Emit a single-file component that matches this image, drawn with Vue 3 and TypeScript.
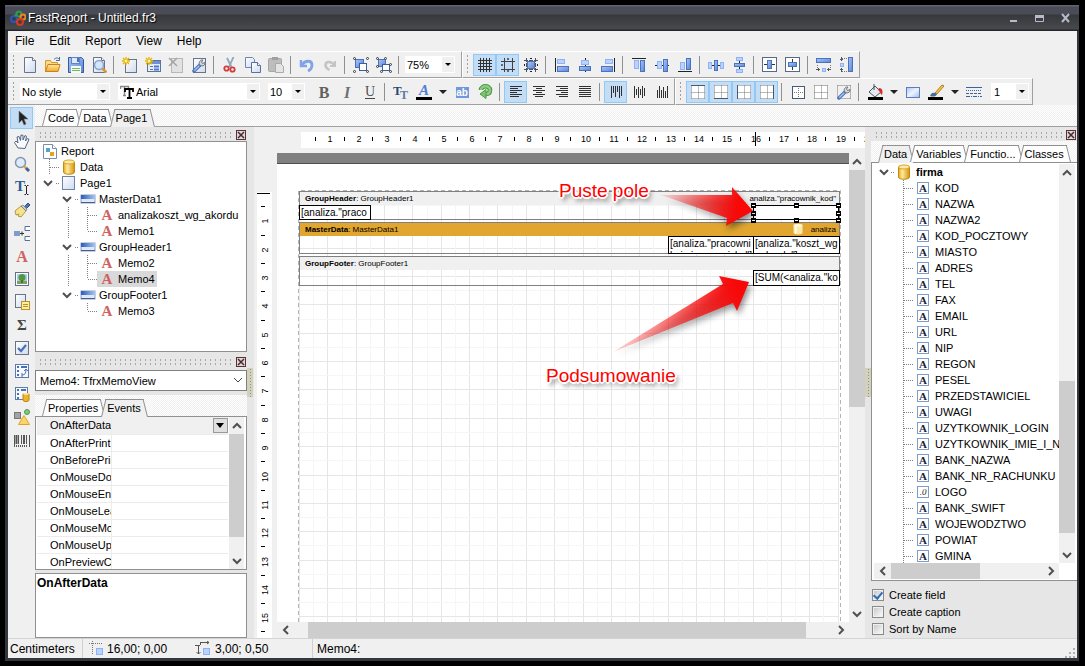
<script setup lang="ts">
type Tool = { icon?: string; label?: string; on?: boolean; drop?: boolean; sep?: boolean }
type TreeRow = { cells: string[]; icon: string; text: string; selected?: boolean; bold?: boolean }

const sep: Tool = { sep: true }
const t = (icon: string, label: string, on = false, drop = false): Tool => ({ icon, label, on, drop })

const serifA = (size: number, y: number, fill: string) =>
  `<text x="8" y="${y}" text-anchor="middle" font-family="Liberation Serif, serif" font-weight="700" font-size="${size}" fill="${fill}">A</text>`

const page = '<path d="M2.500 .500h8l3 3v12h-11z" fill="url(#g-page)" stroke="#66758c"/><path d="M10.500 .500v3h3" fill="#fff" stroke="#66758c"/>'
const spark = '<path d="M4 0v8M0 4h8M1 1l6 6M7 1l-6 6" stroke="#e8b400" stroke-width="1.400"/><circle cx="4" cy="4" r="1.500" fill="#fff3a0"/>'
const wrench = '<path d="M3 14l6-6" stroke="#4b73b8" stroke-width="3.500" stroke-linecap="round"/><path d="M3.200 13.800l5-5" stroke="#9fc0f4" stroke-width="1.500"/><path d="M8.500 7.500c-1-2.500 1-5 3.500-4.500l-1.500 2 1 1.500 2.500-1c.500 2.500-2 4-4 3.200z" fill="#d4d8dc" stroke="#70757b"/>'
const cylinder = '<path d="M2.500 3v10c0 3 11 3 11 0V3z" fill="url(#g-gold)" stroke="#c08a10"/><ellipse cx="8" cy="3" rx="5.500" ry="2" fill="#ffeaa8" stroke="#d9a520"/>'
const dots = (d: string) => `<path d="${d}" stroke="#777" stroke-dasharray="1 1" fill="none"/>`
const frameDots = 'M1.500 1.500h13M1.500 14.500h13M1.500 1.500v13M14.500 1.500v13M8.500 1.500v13M1.500 8.500h13'
const borderIcon = (edge: string) => `<path d="M1 1h14v14H1z" fill="#fff"/>${dots(frameDots)}<path d="${edge}" stroke="#465a73"/>`
const textLines = (xs: number[][]) => xs.map(([a, b], i) => `<path d="M${a} ${2.5 + i * 2}H${b}" stroke="#303030"/>`).join('')
const vertLines = (ys: number[][]) => ys.map(([a, b], i) => `<path d="M${3.5 + i * 2} ${a}V${b}" stroke="#303030"/>`).join('')
const block = (x: number, y: number, w: number, h: number, light = false) =>
  `<rect x="${x}.500" y="${y}.500" width="${w}" height="${h}" fill="${light ? '#b9d2ff' : 'url(#g-blue)'}" stroke="${light ? '#8fb2f4' : '#4a72be'}"/>`

const icons: Record<string, string> = {
  app: '<circle cx="9" cy="4" r="2.500" fill="none" stroke="#2f9a50" stroke-width="2"/><circle cx="4" cy="9" r="3" fill="none" stroke="#2558b8" stroke-width="2"/><circle cx="13" cy="7" r="2.500" fill="none" stroke="#e88a20" stroke-width="2"/><circle cx="10" cy="12" r="3" fill="none" stroke="#d83a20" stroke-width="2"/><circle cx="6" cy="5" r="1.500" fill="#2f9a50"/>',
  new: page,
  open: '<path d="M.500 14.500v-11h5l1 2h6v9z" fill="#f7d98c" stroke="#d79a28"/><path d="M.500 14.500l2.500-7h12l-2 7z" fill="url(#g-folder)" stroke="#c98212"/><path d="M9 2.500c2-2 4-2 5.500 0M14.500 0v3.500h-3.500" fill="none" stroke="#4c6a96"/>',
  save: '<path d="M.500 .500h13l2 2v13H.500z" fill="url(#g-blue)" stroke="#36599c"/><rect x="3.500" y=".500" width="8" height="6" fill="#dbe8fd" stroke="#5f83c6"/><path d="M9 1h2v4H9z" fill="#4d72b6"/><rect x="3" y="9" width="10" height="7" fill="#f4fbf4"/><path d="M4 11.500h8M4 13.500h8" stroke="#74b866"/>',
  preview: page + '<circle cx="8" cy="8" r="4.500" fill="#cfe4fd" fill-opacity=".900" stroke="#8ba6cc" stroke-width="1.500"/><path d="M11.500 11.500l4 4" stroke="#d8962c" stroke-width="2.500"/>',
  newPage: '<rect x="3.500" y="2.500" width="11" height="13" fill="url(#g-page)" stroke="#66758c"/>' + spark,
  newDialog: '<rect x="2.500" y="3.500" width="13" height="11" fill="#e4edfc" stroke="#5f7396"/><path d="M3 4h12v3H3z" fill="#6f92d4"/><path d="M5 9.500h3M5 12.500h3" stroke="#60759a"/><path d="M9 9.500h5M9 12.500h5" stroke="#4a79d0" stroke-width="2"/>' + spark,
  delPage: '<rect x="3.500" y="1.500" width="11" height="14" fill="#e2e2e2" stroke="#b8b8b8"/><path d="M1 1l8 8M9 1L1 9" stroke="#a4a4a4" stroke-width="1.500"/>',
  pageSet: '<rect x="2.500" y="1.500" width="12" height="14" fill="url(#g-page)" stroke="#66758c"/>' + wrench,
  cut: '<path d="M5 1l4.500 9M11.500 0L7 10" stroke="#8fa6bd" stroke-width="1.800"/><circle cx="4.500" cy="11.500" r="2.200" fill="none" stroke="#d23c38" stroke-width="1.800"/><circle cx="10.500" cy="12.500" r="2.200" fill="none" stroke="#d23c38" stroke-width="1.800"/>',
  copy: '<path d="M.500 .500h7l2 2v8h-9z" fill="url(#g-page)" stroke="#6f86b0"/><path d="M6.500 5.500h6l3 3v7h-9z" fill="url(#g-page)" stroke="#55719f"/><path d="M12.500 5.500v3h3" fill="#fff" stroke="#55719f"/>',
  paste: '<rect x=".500" y="1.500" width="13" height="13" rx="1" fill="#bdbdbd" stroke="#a6a6a6"/><rect x="4" y="0" width="6" height="3" fill="#a0a0a0"/><path d="M7.500 6.500h5l3 3v6h-8z" fill="#e4e4e4" stroke="#aaa"/>',
  undo: '<path d="M2 3v6h6" fill="none" stroke="#7fa5e6" stroke-width="2.500"/><path d="M3 8c3-5 10-5 10 0 0 3-2 5-4 6" fill="none" stroke="#7fa5e6" stroke-width="2.800"/>',
  redo: '<path d="M13 4v5H8" fill="none" stroke="#c4c4c4" stroke-width="2"/><path d="M12.500 8c-3-4-9-4-9 0 0 3 2 4 4 5" fill="none" stroke="#c4c4c4" stroke-width="2.500"/>',
  group: block(2, 2, 8, 8) + '<rect x="6.500" y="6.500" width="7" height="7" fill="#fff" stroke="#3f5f9c"/><g fill="none" stroke="#3a3a3a"><circle cx="1.500" cy="1.500" r="1"/><circle cx="14.500" cy="1.500" r="1"/><circle cx="1.500" cy="14.500" r="1"/><circle cx="14.500" cy="14.500" r="1"/></g>',
  ungroup: block(2, 2, 7, 7) + '<rect x="6.500" y="7.500" width="7" height="6" fill="#fff" stroke="#3f5f9c"/><g fill="#eee" stroke="#3a3a3a"><circle cx="1.500" cy="1.500" r="1"/><circle cx="9.500" cy="1.500" r="1"/><circle cx="1.500" cy="9.500" r="1"/><circle cx="5.500" cy="14.500" r="1"/><circle cx="14.500" cy="7.500" r="1"/><circle cx="14.500" cy="14.500" r="1"/></g>',
  grid: '<path d="M3.500 1v14M6.500 1v14M9.500 1v14M12.500 1v14M1 3.500h14M1 6.500h14M1 9.500h14M1 12.500h14" stroke="#303030"/>',
  snap: '<path d="M4.500 1v14M12.500 1v14M1 4.500h14M1 12.500h14" stroke="#404040"/><path d="M5 5h7v7H5z" fill="#c0daf6"/><path d="M7 2h2M7 14h2M2 7v2" stroke="#404040" stroke-width="1.500"/>',
  fit: '<path d="M3.500 1v14M12.500 1v14M1 3.500h14M1 12.500h14" stroke="#505050" stroke-dasharray="4 1"/>' + block(4, 4, 7, 7) + '<path d="M7 1l1 1 1-1M7 15l1-1 1 1M1 7l1 1-1 1M15 7l-1 1 1 1" stroke="#222" fill="none"/>',
  alignL: '<path d="M1.500 1v14" stroke="#222"/>' + block(3, 2, 7, 4, true) + block(3, 9, 11, 5),
  alignC: '<path d="M8.500 1v14" stroke="#222"/>' + block(4, 3, 7, 4, true) + block(2, 9, 11, 4),
  alignR: '<path d="M14.500 1v14" stroke="#222"/>' + block(5, 2, 7, 4, true) + block(1, 9, 11, 5),
  alignT: '<path d="M1 1.500h14" stroke="#222"/>' + block(3, 3, 4, 8, true) + block(9, 3, 4, 11),
  alignM: '<path d="M1 8.500h14" stroke="#222"/>' + block(3, 4, 4, 7, true) + block(9, 2, 4, 12),
  alignB: '<path d="M1 14.500h14" stroke="#222"/>' + block(3, 5, 4, 7, true) + block(9, 1, 4, 11),
  spaceH: '<path d="M0 8.500h16" stroke="#222"/>' + block(0, 5, 3, 6, true) + block(6, 3, 3, 10) + block(12, 5, 3, 6, true),
  spaceV: '<path d="M8.500 0v16" stroke="#222"/>' + block(5, 0, 6, 3, true) + block(3, 6, 10, 3) + block(5, 12, 6, 3, true),
  centerH: '<rect x=".500" y=".500" width="14" height="14" fill="#fff" stroke="#596b82"/><path d="M2 7.500h11" stroke="#333"/>' + block(5, 3, 4, 8),
  centerV: '<rect x=".500" y=".500" width="14" height="14" fill="#fff" stroke="#596b82"/><path d="M7.500 2v11" stroke="#333"/>' + block(3, 5, 8, 4),
  sameW: block(0, 1, 14, 4) + dots('M1.500 8v5M14.500 8v5') + block(6, 11, 3, 3, true) + '<path d="M0 12.500h4M11 12.500h4M2.500 11v3M12.500 11v3" stroke="#555"/>',
  sameH: block(9, 0, 4, 14) + dots('M3 1.500h5M3 14.500h5') + block(1, 6, 3, 3, true) + '<path d="M2.500 0v4M2.500 11v4M1 2.500h3M1 12.500h3" stroke="#555"/>',
  bold: '<text x="8" y="14" text-anchor="middle" font-family="Liberation Serif, serif" font-weight="700" font-size="16" fill="#606060">B</text>',
  italic: '<text x="8" y="14" text-anchor="middle" font-family="Liberation Serif, serif" font-style="italic" font-weight="700" font-size="16" fill="#707070">I</text>',
  under: '<text x="8" y="12" text-anchor="middle" font-family="Liberation Serif, serif" font-size="14" fill="#505050">U</text><path d="M3 14.500h10" stroke="#444"/>',
  fontTT: '<text x="0" y="11" font-family="Liberation Serif, serif" font-weight="700" font-size="13" fill="#2b4a70">T</text><text x="7" y="15" font-family="Liberation Serif, serif" font-weight="700" font-size="12" fill="#5c7da4">T</text>',
  fontSel: '<path d="M.500 5V2.500h8V5M4.500 3v8M3 11.500h3" fill="none" stroke="#888" stroke-width="1.400"/><path d="M5 8V5h8v3M9.500 5v9M7 14h5" fill="none" stroke="#000" stroke-width="1.800"/>',
  fontColor: '<text x="8" y="11" text-anchor="middle" font-family="Liberation Serif, serif" font-weight="700" font-style="italic" font-size="15" fill="#4f80d4">A</text><path d="M0 14.500h16" stroke="#000" stroke-width="3"/>',
  highlight: '<rect x="2" y="3" width="13" height="11" fill="#7397dc"/><text x="8" y="12" text-anchor="middle" font-family="Liberation Sans, sans-serif" font-weight="700" font-size="10" fill="#fff">ab</text>',
  rotate: '<path d="M4 6c0-5 9-5 9 0 0 3-2 4-4 4" fill="none" stroke="#4c9a45" stroke-width="4.500"/><path d="M4 6c0-5 9-5 9 0 0 3-2 4-4 4" fill="none" stroke="#8dcb80" stroke-width="2.500"/><path d="M9 5.500v9L3 10z" fill="#7cc470" stroke="#4c9a45"/>',
  left: textLines([[2, 14], [2, 10], [2, 14], [2, 9], [2, 14], [2, 11]]),
  center: textLines([[2, 14], [5, 11], [2, 14], [5, 11], [2, 14], [4, 12]]),
  right: textLines([[2, 14], [6, 14], [2, 14], [7, 14], [2, 14], [5, 14]]),
  justify: textLines([[2, 14], [2, 14], [2, 14], [2, 14], [2, 14], [2, 14]]),
  top: vertLines([[2, 14], [2, 9], [2, 13], [2, 8], [2, 14], [2, 12]]),
  middle: vertLines([[2, 14], [5, 11], [3, 14], [5, 11], [2, 14], [4, 12]]),
  bottom: vertLines([[6, 14], [2, 14], [6, 14], [3, 14], [7, 14], [2, 14]]),
  edgeT: borderIcon('M1 1.500h14'),
  edgeB: borderIcon('M1 14.500h14'),
  edgeL: borderIcon('M1.500 1v14'),
  edgeR: borderIcon('M14.500 1v14'),
  edgeAll: '<rect x="2.500" y="2.500" width="12" height="12" fill="#fff" stroke="#465a73"/>' + dots('M8.500 4v10M4 8.500h10'),
  edgeNone: '<path d="M2 2h12v12H2z" fill="#fff"/>' + dots(frameDots),
  edgeSet: dots('M1.500 1.500h13M1.500 14.500h13M1.500 1.500v13M14.500 1.500v13') + wrench,
  fill: '<path d="M2 8l6-6 6 6-6 5z" fill="#e4e9ef" stroke="#46505c"/><path d="M7 0v6" stroke="#46505c"/><path d="M12 4c4 0 4 4 3 7-2-1-2-4-4-5z" fill="#d62d2d"/><path d="M1 14.500h15" stroke="#000" stroke-width="3"/>',
  fillRect: '<rect x="1.500" y="3.500" width="13" height="10" fill="url(#g-sheen)" stroke="#5f7dbb"/>',
  pen: '<path d="M7 9l7-8 2 1-7 8z" fill="#f3c74d" stroke="#b07d1c"/><path d="M2 12c1-3 3-4 5-3l2 1c-1 3-4 3-7 2z" fill="#446c9c"/><path d="M0 14.500h15" stroke="#000" stroke-width="3"/>',
  lines: '<path d="M0 3.500h16" stroke="#3d629c"/><path d="M0 6.500h16" stroke="#3d629c" stroke-dasharray="1 1"/><path d="M0 9.500h16" stroke="#3d629c" stroke-dasharray="3 1"/><path d="M0 12.500h16" stroke="#3d629c" stroke-dasharray="4 1 1 1"/>',
  pointer: '<path d="M5 1v12l3-3 2 5 2-1-2-5h4z" fill="#222" stroke="#777" stroke-width=".600"/>',
  hand: '<path d="M4 15L.500 9.500 2 8l2 2-1-6 2-.500 1.500 4L7 2l2 .300L9 7l2-4.500 1.500.800L11.500 8l2-2.500 1.500.800L12 13l-1 2.500z" fill="#f7f9fd" stroke="#4f6685"/>',
  zoom: '<circle cx="6.500" cy="6.500" r="5" fill="#dcebfd" stroke="#8596ad" stroke-width="1.500"/><path d="M10 10l2 2" stroke="#e0a638" stroke-width="2.500"/><path d="M12 12l3 3" stroke="#44628f" stroke-width="3"/>',
  textTool: '<text x="1" y="12" font-family="Liberation Serif, serif" font-weight="700" font-size="15" fill="#2d5c92">T</text><path d="M12.500 7v8M10.500 6.500h1.500M13 6.500h1.500M10.500 15.500h1.500M13 15.500h1.500" stroke="#222"/>',
  brush: '<path d="M10 5l4-4 2 2-4 4z" fill="#4f74b4" stroke="#314f80"/><path d="M1 9l6-5 5 5-5 6-3-1 1-2-3 1z" fill="#f5e28a" stroke="#b49a3e"/><path d="M7 4l5 5 1-2-4-4z" fill="#c8cdd4" stroke="#5c6675" stroke-width=".600"/>',
  bandTool: '<rect x="0" y="6" width="6" height="5" fill="#7d9cc8"/><path d="M6 8.500h4M8 6.500v4" stroke="#333"/><path d="M16 1.500h-5v4h5M16 11.500h-5v4h5" fill="#fff" stroke="#4f719f"/>',
  memo: serifA(16, 14, '#d0615f'),
  memoSmall: serifA(15, 13, '#d0615f'),
  picture: '<rect x="1.500" y="1.500" width="13" height="13" fill="#fff" stroke="#5f7088"/><path d="M3 3h10v10H3z" fill="#a8cdf5"/><path d="M3 10h10v3H3z" fill="#78a35c"/><circle cx="8" cy="6.500" r="3.500" fill="#4f9a3c"/><path d="M7 9h2v3H7z" fill="#7a5a30"/>',
  subreport: '<rect x="1.500" y=".500" width="10" height="13" fill="url(#g-page)" stroke="#66758c"/><rect x="7.500" y="7.500" width="8" height="8" fill="#ffee9a" stroke="#b5922c"/><path d="M9 10.500h5M9 12.500h5" stroke="#b5922c"/>',
  sum: '<text x="8" y="13" text-anchor="middle" font-family="Liberation Serif, serif" font-weight="700" font-size="15" fill="#444">Σ</text>',
  check: '<rect x="1.500" y="1.500" width="13" height="13" fill="url(#g-page)" stroke="#6a7480"/><path d="M4 8l3 3 5-6" fill="none" stroke="#4670b8" stroke-width="2.200"/>',
  cross: '<rect x="1.500" y="1.500" width="13" height="13" fill="#f6f9ff" stroke="#5f7ba6"/><path d="M3 4h2M7 4h6M4 7v2M4 11v2" stroke="#4670b8" stroke-width="2"/><path d="M8 12c3 0 4-2 4-5M8 10v4M10 8l2-2 2 2" fill="none" stroke="#4670b8"/>',
  crossDb: '<rect x="1.500" y="1.500" width="12" height="12" fill="#f6f9ff" stroke="#5f7ba6"/><path d="M3 4h2M7 4h5M4 7v2M4 11v2" stroke="#4670b8" stroke-width="2"/><path d="M9 8v6c0 2 6 2 6 0V8z" fill="#efb52a" stroke="#b8860b"/><ellipse cx="12" cy="8" rx="3" ry="1" fill="#ffe6a0"/>',
  shapes: '<rect x=".500" y="3.500" width="6" height="6" fill="#a3a3a3" stroke="#777"/><circle cx="13" cy="3" r="2.500" fill="#86c586" stroke="#4d9a4d"/><path d="M10 6.500l5.500 9h-11z" fill="#fbd46a" stroke="#dba42a"/>',
  barcode: '<path d="M.500 3v12M4.500 3v9M7.500 3v9M12.500 3v9M15.500 3v12" stroke="#555"/><path d="M2.500 3v9M10 3v9" stroke="#555" stroke-width="2"/><path d="M2 14h12" stroke="#555" stroke-width="2" stroke-dasharray="1 1"/>',
  report: '<path d="M1.500 1.500h9l4 4v10h-13z" fill="#fff" stroke="#7a8ca8"/><path d="M10.500 1.500v4h4" fill="#fff" stroke="#7a8ca8"/><path d="M4 5h4v4H4z" fill="#52a4cc"/><path d="M8 9h4v4H8z" fill="#eaa21c"/>',
  data: cylinder,
  bandData: '<path d="M2 3v10c0 3 12 3 12 0V3z" fill="#ffe9a8"/><path d="M5 4v10" stroke="#fff" stroke-width="2"/><ellipse cx="8" cy="3" rx="6" ry="2" fill="#fff6d8"/>',
  pageIcon: '<rect x="1.500" y="1.500" width="12" height="13" fill="url(#g-page)" stroke="#6f84a8"/>',
  band: '<rect x="1" y="4" width="14" height="8" fill="#dce9ff" stroke="#8ba0c4"/><path d="M1 4h14v4H1z" fill="url(#g-band)"/><path d="M1 11.500h14" stroke="#4a5e86"/>',
  fieldA: '<rect x="2.500" y="2.500" width="11" height="11" fill="#fff" stroke="#7d9dc6"/>' + serifA(11, 12, '#18243c'),
  fieldN: '<rect x="2.500" y="2.500" width="11" height="11" fill="#fff" stroke="#7d9dc6"/><text x="8" y="11" text-anchor="middle" font-family="Liberation Serif, serif" font-style="italic" font-size="9" fill="#222">.0</text>',
  pos: dots('M0 2.500h14M3.500 0v14') + block(7, 7, 6, 6, true),
  size: '<path d="M5 1.500h9M3.500 5v8M12 0l2 1.500L12 3M1.500 11l2 2 2-2M0 4.500h5M5.500 1v3" fill="none" stroke="#555"/>' + block(8, 7, 6, 6, true),
}

const bar1a: Tool[] = [
  t('new', 'New report'), t('open', 'Open'), t('save', 'Save'), t('preview', 'Preview'), sep,
  t('newPage', 'New page'), t('newDialog', 'New dialog'), t('delPage', 'Delete page'), t('pageSet', 'Page settings'), sep,
  t('cut', 'Cut'), t('copy', 'Copy'), t('paste', 'Paste'), sep,
  t('undo', 'Undo'), t('redo', 'Redo'), sep,
  t('group', 'Group'), t('ungroup', 'Ungroup'), sep,
]
const bar1b: Tool[] = [
  t('grid', 'Show grid', true), t('snap', 'Align to grid', true), t('fit', 'Fit to grid'), sep,
  t('alignL', 'Align left edges'), t('alignC', 'Center horizontally'), t('alignR', 'Align right edges'), sep,
  t('alignT', 'Align top edges'), t('alignM', 'Center vertically'), t('alignB', 'Align bottom edges'), sep,
  t('spaceH', 'Space horizontally'), t('spaceV', 'Space vertically'), sep,
  t('centerH', 'Center in band horizontally'), t('centerV', 'Center in band vertically'), sep,
  t('sameW', 'Same width'), t('sameH', 'Same height'),
]
const bar2a: Tool[] = [
  t('bold', 'Bold'), t('italic', 'Italic'), t('under', 'Underline'), sep,
  t('fontTT', 'Font settings'), t('fontColor', 'Font color', false, true), t('highlight', 'Highlight'), t('rotate', 'Rotation'), sep,
  t('left', 'Align left', true), t('center', 'Align center'), t('right', 'Align right'), t('justify', 'Justify'), sep,
  t('top', 'Align top', true), t('middle', 'Align middle'), t('bottom', 'Align bottom'),
]
const bar2b: Tool[] = [
  t('edgeT', 'Top line', true), t('edgeB', 'Bottom line', true), t('edgeL', 'Left line', true), t('edgeR', 'Right line', true), sep,
  t('edgeAll', 'All lines'), t('edgeNone', 'No lines'), t('edgeSet', 'Edit frame'), sep,
  t('fill', 'Fill color', false, true), t('fillRect', 'Edit fill'), t('pen', 'Line color', false, true), t('lines', 'Line style'),
]
const toolbox: Tool[] = [
  t('pointer', 'Select', true), t('hand', 'Hand'), t('zoom', 'Zoom'), t('textTool', 'Edit text'), t('brush', 'Copy format'),
  t('bandTool', 'Insert band'), t('memo', 'Text object'), t('picture', 'Picture object'), t('subreport', 'Subreport object'),
  t('sum', 'System text'), t('check', 'Check box object'), t('cross', 'Cross-tab'), t('crossDb', 'DB cross-tab'),
  t('shapes', 'Draw'), t('barcode', 'Barcode object'),
]

const menus = ['File', 'Edit', 'Report', 'View', 'Help']

const reportTree: TreeRow[] = [
  { cells: [], icon: 'report', text: 'Report' },
  { cells: ['tee'], icon: 'data', text: 'Data' },
  { cells: ['open'], icon: 'pageIcon', text: 'Page1' },
  { cells: ['', 'open'], icon: 'band', text: 'MasterData1' },
  { cells: ['', 'line', 'tee'], icon: 'memoSmall', text: 'analizakoszt_wg_akordu' },
  { cells: ['', 'line', 'end'], icon: 'memoSmall', text: 'Memo1' },
  { cells: ['', 'open'], icon: 'band', text: 'GroupHeader1' },
  { cells: ['', 'line', 'tee'], icon: 'memoSmall', text: 'Memo2' },
  { cells: ['', 'line', 'end'], icon: 'memoSmall', text: 'Memo4', selected: true },
  { cells: ['', 'open'], icon: 'band', text: 'GroupFooter1' },
  { cells: ['', '', 'end'], icon: 'memoSmall', text: 'Memo3' },
]
const fields = ['KOD', 'NAZWA', 'NAZWA2', 'KOD_POCZTOWY', 'MIASTO', 'ADRES', 'TEL', 'FAX', 'EMAIL', 'URL', 'NIP', 'REGON', 'PESEL',
  'PRZEDSTAWICIEL', 'UWAGI', 'UZYTKOWNIK_LOGIN', 'UZYTKOWNIK_IMIE_I_NAZWISKO', 'BANK_NAZWA', 'BANK_NR_RACHUNKU', 'LOGO',
  'BANK_SWIFT', 'WOJEWODZTWO', 'POWIAT', 'GMINA']
const dataTree: TreeRow[] = [
  { cells: ['open'], icon: 'data', text: 'firma', bold: true },
  ...fields.map((text) => ({ cells: ['', 'tee'], icon: text === 'LOGO' ? 'fieldN' : 'fieldA', text })),
]
const cellPath: Record<string, string> = {
  tee: 'M9.500 0v16M10 8.500h9',
  end: 'M9.500 0v8M10 8.500h9',
  line: 'M9.500 0v16',
  open: 'M16 8.500h3',
}

const events = ['OnAfterData', 'OnAfterPrint', 'OnBeforePrint', 'OnMouseDown', 'OnMouseEnter', 'OnMouseLeave', 'OnMouseMove', 'OnMouseUp', 'OnPreviewClick']

const CM = 28.35
const at = (n: number) => Math.round(n * CM)
const marks = Array.from({ length: 20 }, (_, i) => i + 1)
const halves = Array.from({ length: 40 }, (_, i) => i)
const handles = [[3, 3], [46, 3], [88, 3], [3, 11], [88, 11], [3, 18], [46, 18], [88, 18]]
</script>

<template>
  <div class="desktop">
    <svg class="defs" width="0" height="0" aria-hidden="true">
      <defs>
        <linearGradient id="g-page" x1="0" y1="0" x2="1" y2="1"><stop offset="0" stop-color="#fff" /><stop offset="1" stop-color="#cfdaf0" /></linearGradient>
        <linearGradient id="g-blue" x1="0" y1="0" x2="1" y2="1"><stop offset="0" stop-color="#a8c6fa" /><stop offset="1" stop-color="#5a84d2" /></linearGradient>
        <linearGradient id="g-sheen" x1="0" y1="0" x2="1" y2="1"><stop offset="0" stop-color="#a9c5f6" /><stop offset=".5" stop-color="#eef4ff" /><stop offset="1" stop-color="#9dbbf0" /></linearGradient>
        <linearGradient id="g-folder" x1="0" y1="0" x2="0" y2="1"><stop offset="0" stop-color="#ffe9a6" /><stop offset="1" stop-color="#f0a92c" /></linearGradient>
        <linearGradient id="g-gold" x1="0" y1="0" x2="1" y2="0"><stop offset="0" stop-color="#e8a818" /><stop offset=".35" stop-color="#ffe9a0" /><stop offset="1" stop-color="#d8930c" /></linearGradient>
        <linearGradient id="g-band" x1="0" y1="0" x2="1" y2="0"><stop offset="0" stop-color="#2d5cb4" /><stop offset="1" stop-color="#a9c4f2" /></linearGradient>
        <linearGradient id="g-arrow1" gradientUnits="userSpaceOnUse" x1="384" y1="44" x2="460" y2="56"><stop offset="0" stop-color="#f00" stop-opacity=".1" /><stop offset="1" stop-color="#f90808" /></linearGradient>
        <linearGradient id="g-arrow2" gradientUnits="userSpaceOnUse" x1="336" y1="199" x2="460" y2="135"><stop offset="0" stop-color="#f00" stop-opacity=".15" /><stop offset="1" stop-color="#f90808" /></linearGradient>
      </defs>
    </svg>

    <div class="window">
      <header class="title">
        <svg class="ic" viewBox="0 0 16 16" v-html="icons.app" />
        <h1>FastReport - Untitled.fr3</h1>
        <button aria-label="Minimize"><svg width="10" height="10"><path d="M1 8h7" stroke="#b4bcc8" stroke-width="2" /></svg></button>
        <button aria-label="Maximize"><svg width="10" height="10"><path d="M.5 2.500h8v6h-8z" fill="none" stroke="#b4bcc8" /><path d="M0 3.500h9" stroke="#b4bcc8" stroke-width="3" /></svg></button>
        <button aria-label="Close"><svg width="10" height="10"><path d="M1 1l7 8M8 1L1 9" stroke="#b4bcc8" stroke-width="2" /></svg></button>
      </header>

      <nav class="menu"><button v-for="m in menus" :key="m">{{ m }}</button></nav>

      <div class="dock">
        <div class="row">
          <div class="bar">
            <i class="grip" />
            <template v-for="(b, i) in bar1a" :key="i">
              <i v-if="b.sep" class="sep" />
              <button v-else class="tool" :aria-label="b.label"><svg class="ic" viewBox="0 0 16 16" v-html="icons[b.icon!]" /></button>
            </template>
            <span class="combo zoom"><select aria-label="Zoom"><option>75%</option></select><svg class="drop" width="12" height="15"><path d="M3 6h6l-3 3z" /></svg></span>
          </div>
          <div class="bar">
            <i class="grip" />
            <template v-for="(b, i) in bar1b" :key="i">
              <i v-if="b.sep" class="sep" />
              <button v-else class="tool" :class="{ on: b.on }" :aria-label="b.label"><svg class="ic" viewBox="0 0 16 16" v-html="icons[b.icon!]" /></button>
            </template>
          </div>
        </div>
        <div class="row">
          <div class="bar">
            <i class="grip" />
            <span class="combo style"><select aria-label="Style"><option>No style</option></select><svg class="drop" width="12" height="15"><path d="M3 6h6l-3 3z" /></svg></span>
            <span class="combo font"><svg class="ic" viewBox="0 0 16 16" v-html="icons.fontSel" /><select aria-label="Font"><option>Arial</option></select><svg class="drop" width="12" height="15"><path d="M3 6h6l-3 3z" /></svg></span>
            <span class="combo size"><select aria-label="Font size"><option>10</option></select><svg class="drop" width="12" height="15"><path d="M3 6h6l-3 3z" /></svg></span>
            <template v-for="(b, i) in bar2a" :key="i">
              <i v-if="b.sep" class="sep" />
              <button v-else class="tool" :class="{ on: b.on, wide: b.drop }" :aria-label="b.label"><svg class="ic" viewBox="0 0 16 16" v-html="icons[b.icon!]" /><svg v-if="b.drop" width="8" height="16"><path d="M0 6h8l-4 4z" fill="#222" /></svg></button>
            </template>
          </div>
          <div class="bar">
            <i class="grip" />
            <template v-for="(b, i) in bar2b" :key="i">
              <i v-if="b.sep" class="sep" />
              <button v-else class="tool" :class="{ on: b.on, wide: b.drop }" :aria-label="b.label"><svg class="ic" viewBox="0 0 16 16" v-html="icons[b.icon!]" /><svg v-if="b.drop" width="8" height="16"><path d="M0 6h8l-4 4z" fill="#222" /></svg></button>
            </template>
            <span class="combo width"><select aria-label="Line width"><option>1</option></select><svg class="drop" width="12" height="15"><path d="M3 6h6l-3 3z" /></svg></span>
          </div>
        </div>
      </div>

      <div class="body">
        <div class="toolbox">
          <button v-for="b in toolbox" :key="b.icon" class="tool" :class="{ on: b.on }" :aria-label="b.label"><svg class="ic" viewBox="0 0 16 16" v-html="icons[b.icon!]" /></button>
        </div>

        <div class="main">
          <div class="tabs top"><button class="tab"><span>Code</span></button><button class="tab"><span>Data</span></button><button class="tab current"><span>Page1</span></button></div>

          <div class="columns">
            <aside class="inspector">
              <div class="head"><i class="dots" /><button class="close" aria-label="Close report tree"><svg width="10" height="10"><rect width="10" height="10" fill="#5b2f38" /><path d="M1 1h8v8H1z" fill="#e9d3d6" /><path d="M2 2l6 6M8 2L2 8" stroke="#333" stroke-width="1.500" /></svg></button></div>
              <div class="tree report">
                <div v-for="(r, i) in reportTree" :key="i" class="node">
                  <svg v-for="(c, j) in r.cells" :key="j" class="cell" viewBox="0 0 19 16">
                    <path :d="cellPath[c] || ''" class="dotted" />
                    <path v-if="c === 'open'" d="M4 6l4 4 4-4" class="chev" />
                  </svg>
                  <span class="pick" :class="{ selected: r.selected }"><svg class="ic" viewBox="0 0 16 16" v-html="icons[r.icon]" />{{ r.text }}</span>
                </div>
              </div>
              <div class="head second"><i class="dots" /><button class="close" aria-label="Close inspector"><svg width="10" height="10"><rect width="10" height="10" fill="#5b2f38" /><path d="M1 1h8v8H1z" fill="#e9d3d6" /><path d="M2 2l6 6M8 2L2 8" stroke="#333" stroke-width="1.500" /></svg></button></div>
              <span class="combo object"><select aria-label="Object"><option>Memo4: TfrxMemoView</option></select><svg width="12" height="15"><path d="M2 5l4 4 4-4" fill="none" stroke="#444" /></svg></span>
              <div class="tabs"><button class="tab"><span>Properties</span></button><button class="tab current"><span>Events</span></button></div>
              <div class="grid">
                <table>
                  <tbody>
                    <tr v-for="(e, i) in events" :key="e" :class="{ first: i === 0 }">
                      <th scope="row">{{ e }}</th>
                      <td><button v-if="i === 0" class="pull" aria-label="Choose handler"><svg width="13" height="13"><path d="M2 4h8l-4 5z" /></svg></button></td>
                    </tr>
                  </tbody>
                </table>
                <div class="vscroll events-scroll">
                  <button aria-label="Up"><svg width="12" height="10"><path d="M2 7l4-4 4 4" class="chev" /></svg></button>
                  <i class="thumb" /><i class="rest" />
                  <button aria-label="Down"><svg width="12" height="10"><path d="M2 3l4 4 4-4" class="chev" /></svg></button>
                </div>
              </div>
              <div class="hint">OnAfterData</div>
            </aside>

            <div class="split"><i /></div>

            <section class="work">
              <div class="ruler-h">
                <svg width="100%" height="16">
                  <g v-for="n in marks" :key="n">
                    <text :x="at(n) + 1" y="10" text-anchor="middle">{{ n }}</text>
                    <path :d="`M${at(n - 0.5)}.500 5v4`" stroke="#000" />
                  </g>
                  <path d="M454.500 0v14" stroke="#000" />
                </svg>
              </div>
              <div class="ruler-v">
                <svg width="15" height="100%">
                  <path d="M0 1.500h13" stroke="#000" />
                  <g v-for="n in marks" :key="n">
                    <text :transform="`translate(11 ${at(n) + 1}) rotate(-90)`" text-anchor="middle">{{ n }}</text>
                    <path :d="`M4 ${at(n - 0.5)}.500h4`" stroke="#000" />
                  </g>
                </svg>
              </div>
              <div class="canvas">
                <svg class="paper" width="100%" height="100%">
                  <g transform="translate(22 28)">
                    <template v-for="n in halves" :key="n">
                      <path v-if="n <= 38" :d="`M${at(n / 2)}.500 0V900`" :stroke="n % 2 ? '#f6f6f6' : '#e6e6e6'" />
                      <path :d="`M0 ${at(n / 2)}.500H540`" :stroke="n % 2 ? '#f6f6f6' : '#e6e6e6'" />
                    </template>
                    <path d="M-.500 900V-.500H541.500V900" fill="none" stroke="#b4b4b4" stroke-dasharray="4 3" />
                  </g>
                </svg>
                <div class="band header"><div class="cap"><span><b>GroupHeader</b>: GroupHeader1</span><span>analiza."pracownik_kod"</span></div></div>
                <div class="band master"><div class="cap"><span><b>MasterData</b>: MasterData1</span><svg class="ic" viewBox="0 0 16 16" v-html="icons.bandData" /><span>analiza</span></div></div>
                <div class="band footer"><div class="cap"><span><b>GroupFooter</b>: GroupFooter1</span></div></div>
                <div class="memo m2">[analiza."praco</div>
                <div class="memo m4" />
                <div class="memo m1">[analiza."pracowni<br>k_imie_nazwisko"]</div>
                <div class="memo mk">[analiza."koszt_wg<br>_akordu"]</div>
                <div class="memo m3">[SUM(&lt;analiza."ko</div>
                <svg class="handles" width="92" height="22">
                  <g v-for="(h, i) in handles" :key="i"><rect :x="h[0] - 2" :y="h[1] - 2" width="5" height="5" fill="#000" /><path :d="`M${h[0] - 1} ${h[1]}.500h3`" stroke="#fff" /></g>
                </svg>
                <svg class="arrows" width="520" height="240">
                  <path d="M384 42L455 42V34L476 58L449 73L450 65z" fill="url(#g-arrow1)" />
                  <path d="M336 199L446 131L442 123L472 129L460 158L456 150z" fill="url(#g-arrow2)" />
                </svg>
                <span class="note n1">Puste pole</span>
                <span class="note n2">Podsumowanie</span>
              </div>
              <div class="vscroll page-v">
                <button aria-label="Up"><svg width="12" height="10"><path d="M2 7l4-4 4 4" class="chev" /></svg></button>
                <i class="thumb" /><i class="rest" />
                <button aria-label="Down"><svg width="12" height="10"><path d="M2 3l4 4 4-4" class="chev" /></svg></button>
              </div>
              <div class="hscroll page-h">
                <button aria-label="Left"><svg width="10" height="12"><path d="M7 2L3 6l4 4" class="chev" /></svg></button>
                <i class="lead" /><i class="thumb" /><i class="rest" />
                <button aria-label="Right"><svg width="10" height="12"><path d="M3 2l4 4-4 4" class="chev" /></svg></button>
              </div>
            </section>

            <div class="split narrow"><i /></div>

            <aside class="fields">
              <div class="head"><i class="dots" /><button class="close" aria-label="Close data tree"><svg width="10" height="10"><rect width="10" height="10" fill="#5b2f38" /><path d="M1 1h8v8H1z" fill="#e9d3d6" /><path d="M2 2l6 6M8 2L2 8" stroke="#333" stroke-width="1.500" /></svg></button></div>
              <div class="tabs"><button class="tab current"><span>Data</span></button><button class="tab"><span>Variables</span></button><button class="tab"><span>Functio...</span></button><button class="tab"><span>Classes</span></button></div>
              <div class="fieldbox">
                <div class="tree">
                  <div v-for="(r, i) in dataTree" :key="i" class="node" :class="{ bold: r.bold }">
                    <svg v-for="(c, j) in r.cells" :key="j" class="cell" viewBox="0 0 19 16">
                      <path :d="cellPath[c] || ''" class="dotted" />
                      <path v-if="c === 'open'" d="M5 6l4 4 4-4" class="chev" />
                    </svg>
                    <span class="pick"><svg class="ic" viewBox="0 0 16 16" v-html="icons[r.icon]" />{{ r.text }}</span>
                  </div>
                </div>
                <div class="vscroll field-v">
                  <button aria-label="Up"><svg width="12" height="10"><path d="M2 7l4-4 4 4" class="chev" /></svg></button>
                  <i class="lead" /><i class="thumb" /><i class="rest" />
                  <button aria-label="Down"><svg width="12" height="10"><path d="M2 3l4 4 4-4" class="chev" /></svg></button>
                </div>
                <div class="hscroll field-h">
                  <button aria-label="Left"><svg width="10" height="12"><path d="M7 2L3 6l4 4" class="chev" /></svg></button>
                  <i class="thumb" /><i class="rest" />
                  <button aria-label="Right"><svg width="10" height="12"><path d="M3 2l4 4-4 4" class="chev" /></svg></button>
                </div>
              </div>
              <div class="checks">
                <label><input type="checkbox" checked>Create field</label>
                <label><input type="checkbox">Create caption</label>
                <label><input type="checkbox">Sort by Name</label>
              </div>
            </aside>
          </div>
        </div>
      </div>

      <footer class="status">
        <span class="unit">Centimeters</span>
        <span class="coord"><svg class="ic" viewBox="0 0 16 16" v-html="icons.pos" />16,00; 0,00</span>
        <span class="extent"><svg class="ic" viewBox="0 0 16 16" v-html="icons.size" />3,00; 0,50</span>
        <span class="object-name">Memo4:</span>
        <svg class="sizer" width="10" height="10"><path d="M8 1h2M4 5h2M8 5h2M0 9h2M4 9h2M8 9h2" stroke="#b0b0b0" stroke-width="2" /></svg>
      </footer>
    </div>
  </div>
</template>

<style>
html, body { margin: 0; background: #000; }
</style>

<style scoped>
* { box-sizing: border-box; }
.desktop { height: 100vh; padding: 5px 6px 5px 5px; background: #000; font: 11px/16px "Liberation Sans", Arial, sans-serif; color: #000; display: flex; }
.defs { position: absolute; }
button { border: 0; background: none; padding: 0; font: inherit; color: inherit; }
select { appearance: none; border: 0; background: none; font: inherit; color: inherit; padding: 0; flex: 1; min-width: 0; outline: 0; }
.ic { width: 16px; height: 16px; flex: none; display: block; }
.chev { fill: none; stroke: #505050; stroke-width: 2; }
.dotted { fill: none; stroke: #808080; stroke-dasharray: 1 1; }

.window { flex: 1; min-width: 0; display: flex; flex-direction: column; background: #f0f0f0; border: solid #34373e; border-width: 0 2px 3px 3px; }
.title { height: 26px; margin: 0 -2px 0 -3px; padding: 0 8px 0 5px; display: flex; align-items: center; background: linear-gradient(#62636f 0 1px, #4a4c57 2px 9px, #37383b 10px, #47494d 24px, #23262a 25px); }
.title h1 { flex: 1; margin: 0 0 0 2px; font-size: 12px; font-weight: 400; color: #fff; text-shadow: 1px 1px 1px #000; }
.title button { width: 10px; height: 10px; margin-left: 16px; }
.title svg { display: block; }
.menu { height: 20px; display: flex; align-items: center; gap: 15px; padding: 0 7px; font-size: 12px; }

.row { display: flex; height: 27px; }
.bar { display: flex; align-items: center; border: 1px solid #a0a0a0; border-top-color: #fff; border-left-color: #fff; padding-right: 1px; }
.row .bar:first-child { border-left: 0; }
.row .bar + .bar .grip { margin: 0 4px 0 3px; }
.grip { width: 3px; height: 21px; margin: 0 3px 0 4px; background: radial-gradient(circle, #a0a0a0 1px, transparent 1px) 0 0 / 3px 4px; }
.sep { width: 1px; height: 18px; margin: 0 4px 0 3px; background: #909090; }
.tool { width: 23px; height: 22px; display: flex; align-items: center; justify-content: center; flex: none; border: 1px solid transparent; }
.tool.wide { width: 38px; gap: 7px; }
.tool.on { background: #c2ddf5; border-color: #90c8f6; }
.combo { display: flex; align-items: center; height: 17px; background: #fff; padding-left: 2px; }
.combo .drop { background: #f0f0f0; margin-right: 1px; }
.zoom { width: 50px; margin: 0 5px 0 2px; }
.style { width: 90px; margin-left: 2px; }
.font { width: 142px; margin: 0 8px; }
.size { width: 37px; margin-right: 7px; }
.width { width: 38px; margin: 0 2px 0 6px; padding-left: 3px; }

.body { flex: 1; min-height: 0; display: flex; }
.toolbox { width: 27px; padding: 2px 2px; display: flex; flex-direction: column; gap: 1px; }
.main { flex: 1; min-width: 0; display: flex; flex-direction: column; }
.tabs { display: flex; align-items: flex-end; height: 21px; padding-left: 7px; background: repeating-conic-gradient(#f0f0f0 0 25%, #fff 0 50%) 0 0 / 2px 2px; flex: none; }
.tabs.top { height: 22px; border-bottom: 1px solid #a0a0a0; }
.tab { position: relative; height: 17px; padding: 0 3px 0 6px; line-height: 16px; }
.tab::before, .tab::after { content: ""; position: absolute; top: 0; bottom: 0; background: #fff; border-top: 1px solid #909090; }
.tab::before { left: 0; right: 40%; border-left: 1px solid #909090; transform: skewX(-14deg); transform-origin: 0 100%; }
.tab::after { left: 40%; right: -4px; border-right: 1px solid #909090; transform: skewX(14deg); transform-origin: 100% 100%; }
.tab.current::before, .tab.current::after { background: #f0f0f0; }
.tab.current { margin-bottom: -1px; height: 18px; }
.tab span { position: relative; z-index: 1; }

.columns { flex: 1; min-height: 0; display: flex; background: #e6e6e6; }
.inspector { width: 212px; display: flex; flex-direction: column; }
.head { height: 14px; display: flex; align-items: center; justify-content: space-between; padding: 1px 1px 0 3px; flex: none; }
.head.second { height: 18px; }
.dots { flex: 1; height: 8px; margin-right: 4px; background: radial-gradient(circle, #a8a8a8 1px, transparent 1px) 0 0 / 5px 4px; }
.close, .close svg { display: block; width: 10px; height: 10px; }
.tree { background: #fff; overflow: hidden; }
.tree.report { flex: 1; border: 1px solid #909090; padding: 1px 0 0 4px; }
.node { display: flex; height: 16px; white-space: nowrap; }
.cell { width: 19px; height: 16px; flex: none; }
.pick { display: flex; padding-right: 2px; }
.pick .ic { margin: 0 3px 0 2px; }
.selected { background: #d9d9d9; }
.bold { font-weight: 700; }
.object { height: 21px; border: 1px solid #808080; padding: 0 2px 0 4px; margin-bottom: 4px; flex: none; }
.grid { height: 154px; border: 1px solid #909090; background: #fff; display: flex; overflow: hidden; flex: none; padding: 0 2px 0 1px; }
table { flex: 1; border-collapse: collapse; table-layout: fixed; height: 153px; margin-right: 1px; }
th { width: 74px; max-width: 74px; height: 17px; padding: 0 0 0 13px; font-weight: 400; text-align: left; overflow: hidden; white-space: nowrap; border: solid #ececec; border-width: 0 1px 1px 0; line-height: 16px; }
td { padding: 0; border-bottom: 1px solid #ececec; }
.first { background: #f0f0f0; }
.pull { display: block; margin-left: auto; width: 15px; height: 15px; border: 1px solid #999; background: #e0e0e0; }
.pull svg { display: block; }
.hint { height: 65px; margin-top: 3px; border: 1px solid #909090; background: #fff; padding: 1px; font-weight: 700; font-size: 12px; flex: none; }

.split { width: 7px; display: flex; align-items: center; flex: none; }
.split i { width: 6px; height: 29px; background: radial-gradient(circle, #909078 1px, transparent 1px) 1px 0 / 5px 3px #d2d2bc; }
.split.narrow { width: 6px; }

.vscroll { display: flex; flex-direction: column; background: #f0f0f0; min-height: 0; }
.hscroll { display: flex; background: #f0f0f0; min-width: 0; }
.vscroll button { height: 17px; display: flex; align-items: center; justify-content: center; flex: none; }
.hscroll button { width: 17px; display: flex; align-items: center; justify-content: center; flex: none; }
.thumb { background: #cdcdcd; }

.work { flex: 1; min-width: 0; background: #f0f0f0; display: grid; grid-template-columns: 15px minmax(0, 1fr) 16px; grid-template-rows: 16px minmax(0, 1fr) 16px; padding: 5px 0 0 3px; }
.ruler-h { grid-area: 1 / 2 / 2 / 4; background: #fff; margin-left: 29px; overflow: hidden; }
.ruler-v { grid-area: 2 / 1 / 4 / 2; background: #fff; margin-top: 44px; overflow: hidden; }
.ruler-h svg, .ruler-v svg { display: block; }
.ruler-h text, .ruler-v text { font-size: 9px; }
.canvas { grid-area: 2 / 2 / 3 / 3; margin: 5px 0 0 5px; position: relative; background: #fff; border-top: 10px solid #808080; overflow: hidden; box-shadow: inset 0 1px #505050; }
.paper { position: absolute; left: 0; top: 0; }
.page-v { grid-area: 2 / 3 / 3 / 4; margin-top: 5px; }
.page-h { grid-area: 3 / 2 / 4 / 3; margin-left: 5px; }
.page-v .thumb { flex: 236; } .page-v .rest { flex: 198; }
.page-h .lead { flex: 14; } .page-h .thumb { flex: 498; } .page-h .rest { flex: 26; }

.band, .memo, .handles, .arrows, .note { position: absolute; }
.band { left: 22px; width: 541px; border: 1px solid #808080; font-size: 8px; line-height: 13px; }
.cap { height: 13px; background: #f0f0f0; display: flex; padding: 0 3px 0 5px; }
.cap span:first-child { flex: 1; }
.cap .ic { width: 12px; height: 12px; margin-right: 7px; }
.band.header { top: 28px; height: 29px; }
.band.master { top: 59px; height: 32px; }
.master .cap { background: #e0a62f; }
.band.footer { top: 93px; height: 30px; }
.memo { border: 1px solid #000; background: #fff; font-size: 10px; line-height: 12px; padding: 1px; overflow: hidden; white-space: nowrap; }
.m2 { left: 22px; top: 42px; width: 72px; height: 15px; }
.m4 { left: 476px; top: 42px; width: 86px; height: 15px; }
.m1 { left: 391px; top: 73px; width: 86px; height: 18px; }
.mk { left: 476px; top: 73px; width: 87px; height: 18px; }
.m3 { left: 476px; top: 107px; width: 87px; height: 16px; }
.handles { left: 473px; top: 39px; }
.arrows { left: 0; top: -10px; filter: drop-shadow(2px 4px 3px rgba(0, 0, 0, .45)); }
.note { font-size: 19px; line-height: 22px; color: #f00; text-shadow: -1px -1px #fff, 1px -1px #fff, -1px 1px #fff, 1px 1px #fff, -2px 0 #fff, 2px 0 #fff, 0 -2px #fff, 0 2px #fff, 3px 4px 4px rgba(0, 0, 0, .6); white-space: nowrap; }
.n1 { left: 282px; top: 17px; }
.n2 { left: 269px; top: 202px; }

.fields { width: 206px; display: flex; flex-direction: column; }
.fieldbox { flex: 1; min-height: 0; border: solid #909090; border-width: 1px 0 1px 1px; background: #fff; display: grid; grid-template: minmax(0, 1fr) 16px / minmax(0, 1fr) 16px; padding: 1px 2px 1px 2px; }
.fieldbox .pick .ic { margin-right: 4px; }
.fieldbox .node { padding-left: 1px; }
.field-v .lead { flex: 199; } .field-v .thumb { flex: 152; } .field-v .rest { flex: 13; }
.field-h .thumb { flex: 90; } .field-h .rest { flex: 62; }
.events-scroll { width: 15px; }
.events-scroll .thumb { flex: 103; } .events-scroll .rest { flex: 15; }
.checks { padding: 5px 1px 0; height: 57px; flex: none; }
.checks label { display: flex; align-items: center; gap: 5px; height: 17px; }
.checks input { appearance: none; width: 12px; height: 12px; margin: 0; border: 1px solid #8a8a8a; background: linear-gradient(135deg, #c4c4c4, #fff); box-shadow: inset 0 0 0 1px #f0f0f0; display: grid; place-items: center; }
.checks input:checked::after { content: ""; width: 4px; height: 7px; border: solid #2f6fb5; border-width: 0 2px 2px 0; transform: rotate(40deg); }

.status { height: 20px; display: flex; align-items: center; border-top: 1px solid #d4d4d4; font-size: 12px; padding: 0 2px; }
.status span { display: flex; align-items: center; height: 100%; white-space: nowrap; }
.unit { width: 73px; border-right: 1px solid #d0d0d0; }
.coord { width: 104px; padding-left: 6px; gap: 2px; }
.extent { width: 126px; padding-left: 8px; gap: 4px; border-right: 1px solid #d0d0d0; }
.object-name { flex: 1; padding-left: 4px; }
.sizer { align-self: flex-end; }
</style>
